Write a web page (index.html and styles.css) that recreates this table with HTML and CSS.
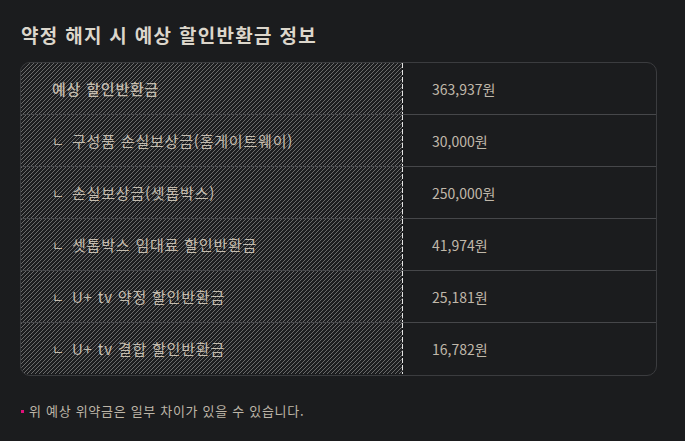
FILE: index.html
```html
<!DOCTYPE html>
<html lang="ko">
<head>
    <meta charset="UTF-8">
    <meta name="viewport" content="width=device-width, initial-scale=1.0">
    <title>약정 해지 시 예상 할인반환금 정보</title>
    <link rel="stylesheet" href="styles.css">
</head>
<body>
    <div class="refund">
        <h2 class="refund-title">약정 해지 시 예상 할인반환금 정보</h2>

        <div class="refund-table">
            <div class="cell label total">예상 할인반환금</div>
            <div class="cell value">363,937원</div>

            <div class="cell label"><span class="mark">ㄴ</span>구성품 손실보상금(홈게이트웨이)</div>
            <div class="cell value">30,000원</div>

            <div class="cell label"><span class="mark">ㄴ</span>손실보상금(셋톱박스)</div>
            <div class="cell value">250,000원</div>

            <div class="cell label"><span class="mark">ㄴ</span>셋톱박스 임대료 할인반환금</div>
            <div class="cell value">41,974원</div>

            <div class="cell label"><span class="mark">ㄴ</span>U+ tv 약정 할인반환금</div>
            <div class="cell value">25,181원</div>

            <div class="cell label last"><span class="mark">ㄴ</span>U+ tv 결합 할인반환금</div>
            <div class="cell value last">16,782원</div>
        </div>

        <p class="refund-note">위 예상 위약금은 일부 차이가 있을 수 있습니다.</p>
    </div>
</body>
</html>
```

FILE: styles.css
```css
body, html {
    margin: 0;
    background-color: #1b1c1e;
    font-family: "Noto Sans CJK KR", "Noto Sans", sans-serif;
    color: #c4bcae;
}
.refund {
    padding: 22px 28px 0 20px;
}
.refund-title {
    margin: 0 0 14px 1px;
    font-size: 19px;
    line-height: 26px;
    font-weight: 700;
    letter-spacing: 1.3px;
    color: #dcd6cb;
}
.refund-table {
    display: grid;
    grid-template-columns: 382px 1fr;
    grid-auto-rows: 52px;
    border: 1px solid #3b3c3f;
    border-radius: 10px;
    overflow: hidden;
}
.cell {
    display: flex;
    align-items: center;
    border-bottom: 1px solid #46474a;
    font-size: 15px;
    letter-spacing: 0.8px;
}
.cell.last {
    height: 51px;
    border-bottom: none;
}
.label {
    padding-left: 31px;
    background-color: #1d1e20;
    background-image:
        linear-gradient(to bottom, #e4e4e4 0 5px, transparent 5px 7px),
        repeating-linear-gradient(135deg, #6b6b6b 0 0.9px, transparent 0.9px 2.83px);
    background-size: 1px 7px, auto;
    background-repeat: repeat-y, repeat;
    background-position: right top, 0 0;
}
.label.total {
    font-weight: 500;
}
.mark {
    width: 20px;
    font-size: 13px;
    letter-spacing: 0;
}
.value {
    padding-left: 29px;
    font-size: 14px;
    letter-spacing: 0;
    color: #c0b8aa;
}
.refund-note {
    position: relative;
    margin: 26px 0 0;
    padding-left: 9px;
    font-size: 13px;
    line-height: 18px;
    letter-spacing: 0.7px;
    color: #bdb5a7;
}
.refund-note::before {
    content: "";
    position: absolute;
    left: 1px;
    top: 8px;
    width: 3px;
    height: 3px;
    background-color: #e0107a;
}
```
